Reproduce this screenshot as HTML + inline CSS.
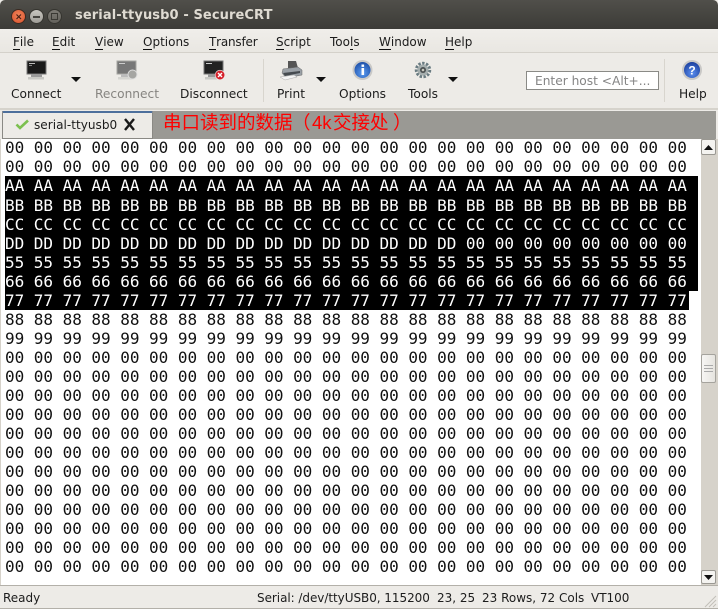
<!DOCTYPE html>
<html><head><meta charset="utf-8"><style>
html,body{margin:0;padding:0;width:718px;height:609px;overflow:hidden;background:#edebe7}
*{box-sizing:border-box}
.a{position:absolute;white-space:nowrap}
body{font-family:"DejaVu Sans","Liberation Sans",sans-serif;font-size:12px;color:#111;position:relative}
u{text-decoration:none;border-bottom:1px solid #111;display:inline-block;line-height:13px}
.m,.t{top:0;line-height:15px;font-size:12px;color:#1c1c1c}
.t{top:87px;font-size:12.2px}
pre{margin:0;font-family:"DejaVu Sans Mono","Liberation Mono",monospace;font-size:16px;line-height:19.05px;letter-spacing:-.03px;color:#111}
.s{display:block;background:#000;color:#fff;width:693px;height:19.05px}
.r{display:block;height:19.05px}
.c{font-family:'Liberation Sans','Noto Sans CJK SC',sans-serif;font-size:18.5px;line-height:24px;color:#f00;top:111px}
.b{top:591px;font-size:12px;line-height:15px;color:#1c1c1c}
</style></head><body>

<div class="a" style="left:0;top:0;width:718px;height:29px;background:linear-gradient(#504f4a,#3c3b37);border-radius:5px 5px 0 0"></div>
<div class="a" style="left:11px;top:9px;width:15px;height:15px;border-radius:50%;background:radial-gradient(circle at 50% 40%,#f0845a,#d9512c);border:1px solid #3a2a22"></div>
<svg class="a" style="left:15px;top:13px" width="8" height="8"><path d="M1.500 1.500L6 6M6 1.500L1.500 6" stroke="#4a2015" stroke-width="1.2"/></svg>
<div class="a" style="left:29px;top:9px;width:15px;height:15px;border-radius:50%;background:linear-gradient(#c8c6c0,#9e9c96);border:1px solid #35342f"></div>
<div class="a" style="left:33px;top:16px;width:7px;height:2px;background:#45443f"></div>
<div class="a" style="left:47px;top:9px;width:15px;height:15px;border-radius:50%;background:linear-gradient(#7c7a74,#64625c);border:1px solid #35342f"></div>
<div class="a" style="left:51px;top:13px;width:7px;height:7px;border:1px solid #3a3934"></div>
<div class="a" style="left:75px;top:7px;font-size:13px;font-weight:bold;color:#dfdbd2;line-height:18px;letter-spacing:.1px">serial-ttyusb0 - SecureCRT</div>

<div class="a" style="left:0;top:29px;width:718px;height:24px;background:linear-gradient(#f0eeea,#e9e7e2);border-bottom:1px solid #d4d1ca"></div>
<div class="a m" style="left:13px;top:35px"><u>F</u>ile</div>
<div class="a m" style="left:52px;top:35px"><u>E</u>dit</div>
<div class="a m" style="left:95px;top:35px"><u>V</u>iew</div>
<div class="a m" style="left:143px;top:35px"><u>O</u>ptions</div>
<div class="a m" style="left:209px;top:35px;letter-spacing:-.2px"><u>T</u>ransfer</div>
<div class="a m" style="left:276px;top:35px"><u>S</u>cript</div>
<div class="a m" style="left:330px;top:35px">Too<u>l</u>s</div>
<div class="a m" style="left:379px;top:35px"><u>W</u>indow</div>
<div class="a m" style="left:445px;top:35px"><u>H</u>elp</div>

<div class="a" style="left:0;top:53px;width:718px;height:57px;background:#edebe7;border-bottom:2px solid #d6d3cc"></div>
<div class="a" style="left:263px;top:59px;width:1px;height:43px;background:#d8d5ce"></div>
<div class="a" style="left:664px;top:59px;width:1px;height:43px;background:#d8d5ce"></div>

<!-- Connect -->
<svg class="a" style="left:25px;top:60px" width="24" height="22"><rect x="2" y="1" width="19" height="13" fill="#1a1a1a" stroke="#777"/><rect x="4" y="3" width="6" height="1" fill="#bbb"/><rect x="4" y="5" width="3" height="1" fill="#888"/><rect x="6" y="14" width="11" height="3" fill="#999"/><rect x="3" y="17" width="16" height="2.500" fill="#c9c9c5"/></svg>
<div class="a t" style="left:11px">Connect</div>
<svg class="a" style="left:71px;top:77px" width="11" height="6"><path d="M0 0H10L5 5Z" fill="#111"/></svg>
<!-- Reconnect -->
<svg class="a" style="left:115px;top:60px" width="24" height="22"><rect x="2" y="1" width="19" height="13" fill="#777" stroke="#a5a5a2"/><rect x="4" y="3" width="6" height="1" fill="#ccc"/><rect x="6" y="14" width="11" height="3" fill="#bbb"/><rect x="3" y="17" width="14" height="2.500" fill="#d5d5d1"/><circle cx="17.500" cy="14.500" r="4.500" fill="#a5a5a2" stroke="#ddd"/></svg>
<div class="a t" style="left:95px;color:#868480">Reconnect</div>
<!-- Disconnect -->
<svg class="a" style="left:202px;top:60px" width="24" height="22"><rect x="2" y="1" width="19" height="13" fill="#222" stroke="#777"/><rect x="4" y="3" width="6" height="1" fill="#ccc"/><rect x="6" y="14" width="9" height="3" fill="#999"/><rect x="3" y="17" width="12" height="2.500" fill="#c9c9c5"/><circle cx="18" cy="15" r="4.800" fill="#d5202a" stroke="#eee" stroke-width=".6"/><path d="M16 13l4 4M20 13l-4 4" stroke="#fff" stroke-width="1.400"/></svg>
<div class="a t" style="left:180px">Disconnect</div>
<!-- Print -->
<svg class="a" style="left:279px;top:59px" width="24" height="22"><path d="M9 2L17 2L19 9H9Z" fill="#555"/><path d="M4 10L19 8L23 11V16L7 19L3 14Z" fill="#9aa0a6" stroke="#666" stroke-width=".5"/><path d="M4 14L21 12V14L6 17Z" fill="#454a4f"/><path d="M1 18L15 16L18 18L6 21Z" fill="#f4f4f4" stroke="#aaa" stroke-width=".5"/></svg>
<div class="a t" style="left:277px">Print</div>
<svg class="a" style="left:316px;top:77px" width="11" height="6"><path d="M0 0H10L5 5Z" fill="#111"/></svg>
<!-- Options -->
<svg class="a" style="left:352px;top:59px" width="22" height="22"><defs><radialGradient id="g1" cx=".5" cy=".7" r=".7"><stop offset="0" stop-color="#5b9bf0"/><stop offset="1" stop-color="#1d4fa8"/></radialGradient></defs><circle cx="10.500" cy="11" r="10" fill="#c9c8c6"/><circle cx="10.500" cy="11" r="8" fill="url(#g1)"/><rect x="9.500" y="9" width="2.600" height="7" fill="#fff"/><rect x="9.500" y="5.500" width="2.600" height="2.400" fill="#fff"/></svg>
<div class="a t" style="left:339px">Options</div>
<!-- Tools -->
<svg class="a" style="left:411px;top:58px" width="24" height="24"><circle cx="12" cy="12" r="6.500" fill="none" stroke="#6a7c82" stroke-width="3.500" stroke-dasharray="2.300 1.400"/><circle cx="12" cy="12" r="5.500" fill="#a5aeae"/><circle cx="12" cy="12" r="3" fill="#4a4f50"/><circle cx="12" cy="12" r="1.300" fill="#c9c9c0"/></svg>
<div class="a t" style="left:408px">Tools</div>
<svg class="a" style="left:448px;top:77px" width="11" height="6"><path d="M0 0H10L5 5Z" fill="#111"/></svg>
<!-- Host -->
<div class="a" style="left:526px;top:71px;width:133px;height:19px;background:#fff;border:1px solid #8a8a86;color:#858585;font-size:12.2px;line-height:18px;padding-left:8px">Enter host &lt;Alt+...</div>
<!-- Help -->
<svg class="a" style="left:681px;top:59px" width="22" height="22"><defs><radialGradient id="g2" cx=".5" cy=".7" r=".7"><stop offset="0" stop-color="#5b8ff0"/><stop offset="1" stop-color="#1b3f9e"/></radialGradient></defs><circle cx="11" cy="11" r="10" fill="#c9c8c6"/><circle cx="11" cy="11" r="8" fill="url(#g2)"/><text x="11" y="15.500" text-anchor="middle" font-size="12" font-weight="bold" fill="#fff" font-family="Liberation Sans">?</text></svg>
<div class="a t" style="left:679px">Help</div>

<!-- tab bar -->
<div class="a" style="left:0;top:110px;width:718px;height:29px;background:#edebe7"></div>
<div class="a" style="left:2px;top:111px;width:714px;height:28px;background:#9a9994"></div>
<div class="a" style="left:2px;top:111px;width:151px;height:28px;background:#edebe7;border:1px solid #8a8984;border-top:2px solid #4d6f9c;border-radius:2px 2px 0 0"></div>
<svg class="a" style="left:15px;top:118px" width="15" height="13"><path d="M1.500 6.500L5 10L13 2.500" fill="none" stroke="#7cc04f" stroke-width="2.600"/></svg>
<div class="a" style="left:34px;top:117px;font-size:12.1px;line-height:16px;color:#1c1c1c">serial-ttyusb0</div>
<svg class="a" style="left:123px;top:118px" width="13" height="13"><path d="M2 1L11 12M11 1L2 12" stroke="#1a1a1a" stroke-width="2.400"/></svg>
<div class="a c" style="left:163px">串口读到的数据</div>
<div class="a c" style="left:292px">（</div>
<div class="a c" style="left:312px">4k</div>
<div class="a c" style="left:333px">交接处</div>
<div class="a c" style="left:393px">）</div>

<!-- terminal -->
<div class="a" style="left:0;top:139px;width:718px;height:447px;background:#d6d2ca"></div>
<div class="a" style="left:1px;top:139px;width:700px;height:446px;background:#fff"></div>
<pre class="a" style="left:5px;top:138.4px">
<span class="r">00 00 00 00 00 00 00 00 00 00 00 00 00 00 00 00 00 00 00 00 00 00 00 00</span><span class="r">00 00 00 00 00 00 00 00 00 00 00 00 00 00 00 00 00 00 00 00 00 00 00 00</span><span class="s">AA AA AA AA AA AA AA AA AA AA AA AA AA AA AA AA AA AA AA AA AA AA AA AA</span><span class="s">BB BB BB BB BB BB BB BB BB BB BB BB BB BB BB BB BB BB BB BB BB BB BB BB</span><span class="s">CC CC CC CC CC CC CC CC CC CC CC CC CC CC CC CC CC CC CC CC CC CC CC CC</span><span class="s">DD DD DD DD DD DD DD DD DD DD DD DD DD DD DD DD 00 00 00 00 00 00 00 00</span><span class="s">55 55 55 55 55 55 55 55 55 55 55 55 55 55 55 55 55 55 55 55 55 55 55 55</span><span class="s">66 66 66 66 66 66 66 66 66 66 66 66 66 66 66 66 66 66 66 66 66 66 66 66</span><span class="s" style="width:684px">77 77 77 77 77 77 77 77 77 77 77 77 77 77 77 77 77 77 77 77 77 77 77 77</span><span class="r">88 88 88 88 88 88 88 88 88 88 88 88 88 88 88 88 88 88 88 88 88 88 88 88</span><span class="r">99 99 99 99 99 99 99 99 99 99 99 99 99 99 99 99 99 99 99 99 99 99 99 99</span><span class="r">00 00 00 00 00 00 00 00 00 00 00 00 00 00 00 00 00 00 00 00 00 00 00 00</span><span class="r">00 00 00 00 00 00 00 00 00 00 00 00 00 00 00 00 00 00 00 00 00 00 00 00</span><span class="r">00 00 00 00 00 00 00 00 00 00 00 00 00 00 00 00 00 00 00 00 00 00 00 00</span><span class="r">00 00 00 00 00 00 00 00 00 00 00 00 00 00 00 00 00 00 00 00 00 00 00 00</span><span class="r">00 00 00 00 00 00 00 00 00 00 00 00 00 00 00 00 00 00 00 00 00 00 00 00</span><span class="r">00 00 00 00 00 00 00 00 00 00 00 00 00 00 00 00 00 00 00 00 00 00 00 00</span><span class="r">00 00 00 00 00 00 00 00 00 00 00 00 00 00 00 00 00 00 00 00 00 00 00 00</span><span class="r">00 00 00 00 00 00 00 00 00 00 00 00 00 00 00 00 00 00 00 00 00 00 00 00</span><span class="r">00 00 00 00 00 00 00 00 00 00 00 00 00 00 00 00 00 00 00 00 00 00 00 00</span><span class="r">00 00 00 00 00 00 00 00 00 00 00 00 00 00 00 00 00 00 00 00 00 00 00 00</span><span class="r">00 00 00 00 00 00 00 00 00 00 00 00 00 00 00 00 00 00 00 00 00 00 00 00</span><span class="r">00 00 00 00 00 00 00 00 00 00 00 00 00 00 00 00 00 00 00 00 00 00 00 00</span></pre>

<!-- scrollbar -->
<div class="a" style="left:701px;top:139px;width:15px;height:16px;background:#f4f3f0;border:1px solid #9a9892;border-radius:2px"></div>
<svg class="a" style="left:704px;top:145px" width="9" height="5"><path d="M0 5H9L4.500 0Z" fill="#111"/></svg>
<div class="a" style="left:701px;top:354px;width:15px;height:29px;background:linear-gradient(90deg,#f7f6f4,#e6e4df);border:1px solid #a5a39d;border-radius:2px"></div>
<div class="a" style="left:704px;top:365px;width:9px;height:7px;border-top:1px solid #aaa;border-bottom:1px solid #aaa"></div>
<div class="a" style="left:704px;top:368px;width:9px;height:1px;background:#aaa"></div>
<div class="a" style="left:701px;top:570px;width:15px;height:14px;background:#f4f3f0;border:1px solid #9a9892;border-radius:2px"></div>
<svg class="a" style="left:704px;top:575px" width="9" height="5"><path d="M0 0H9L4.500 5Z" fill="#111"/></svg>

<!-- status -->
<div class="a" style="left:0;top:585px;width:718px;height:24px;background:#edebe7;border-top:1px solid #b3b0a9;border-bottom:1px solid #b3b0a9"></div>
<div class="a b" style="left:3px">Ready</div>
<div class="a b" style="left:257px;letter-spacing:-.05px">Serial: /dev/ttyUSB0, 115200</div>
<div class="a b" style="left:437px">23, 25</div>
<div class="a b" style="left:482px">23 Rows, 72 Cols</div>
<div class="a b" style="left:591px">VT100</div>
<svg class="a" style="left:704px;top:595px" width="13" height="13"><path d="M12 1L1 12M12 5L5 12M12 9L9 12" stroke="#c2bfb8"/></svg>
</body></html>
